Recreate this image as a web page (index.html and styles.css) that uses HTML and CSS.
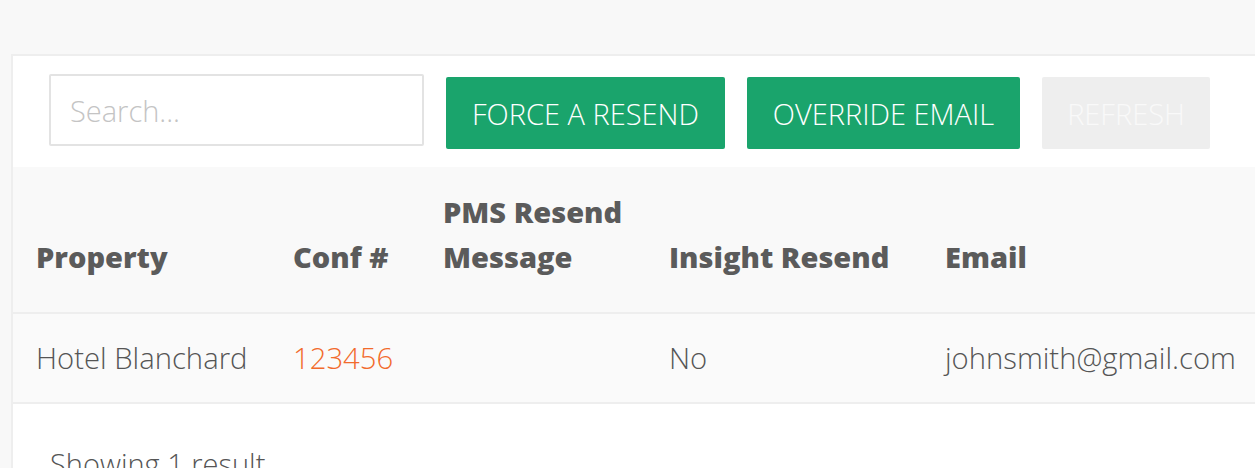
FILE: index.html
```html
<!DOCTYPE html>
<html>
<head>
<meta charset="utf-8">
<link rel="stylesheet" href="styles.css">
</head>
<body>
<div class="page">
  <div class="card">
    <div class="toolbar">
      <input class="search" type="text" placeholder="Search...">
      <button class="btn btn-green btn-resend">FORCE A RESEND</button>
      <button class="btn btn-green btn-override">OVERRIDE EMAIL</button>
      <button class="btn btn-disabled btn-refresh">REFRESH</button>
    </div>
    <table class="grid">
      <thead>
        <tr>
          <th class="c-prop">Property</th>
          <th class="c-conf">Conf #</th>
          <th class="c-pms">PMS Resend Message</th>
          <th class="c-ins">Insight Resend</th>
          <th class="c-email">Email</th>
        </tr>
      </thead>
      <tbody>
        <tr>
          <td>Hotel Blanchard</td>
          <td class="conf">123456</td>
          <td></td>
          <td>No</td>
          <td>johnsmith@gmail.com</td>
        </tr>
      </tbody>
    </table>
    <div class="footer">Showing 1 result</div>
  </div>
</div>
</body>
</html>
```
FILE: styles.css
```css
html, body {
  margin: 0;
  padding: 0;
}
body {
  background: #f8f8f8;
  font-family: "Open Sans", "Liberation Sans", sans-serif;
  font-weight: 300;
  color: #555;
  overflow: hidden;
}
.page {
  padding-top: 54px;
  padding-left: 11px;
}
.card {
  width: 1300px;
  background: #fff;
  border: 2px solid #eeeeee;
  border-right: none;
}
.toolbar {
  display: flex;
  align-items: flex-start;
  gap: 22px;
  padding: 18px 36px;
  height: 75px;
}
.search {
  box-sizing: border-box;
  width: 375px;
  height: 72px;
  border: 2px solid #e3e3e3;
  border-radius: 2px;
  padding: 0 19px;
  font-family: "Open Sans", sans-serif;
  font-weight: 300;
  font-size: 29px;
  color: #555;
  outline: none;
}
.search::placeholder {
  color: #c4c4c4;
}
.btn {
  box-sizing: border-box;
  margin-top: 3px;
  height: 72px;
  border: none;
  border-radius: 2px;
  font-family: "Open Sans", sans-serif;
  font-weight: 300;
  font-size: 29px;
  padding: 0;
  text-align: center;
}
.btn-green {
  background: #1aa46c;
  color: #fff;
}
.btn-disabled {
  background: #eeeeee;
  color: #f9f9f9;
}
.btn-resend { width: 279px; }
.btn-override { width: 273px; }
.btn-refresh { width: 168px; }
.grid {
  border-collapse: collapse;
  table-layout: fixed;
  width: 1290px;
}
.grid th, .grid td {
  box-sizing: border-box;
  padding: 0 10px 0 23px;
  text-align: left;
  vertical-align: middle;
}
.grid thead tr {
  background: #f9f9f9;
  height: 146px;
  border-bottom: 2px solid #eeeeee;
}
.grid th {
  font-weight: 800;
  font-size: 29px;
  line-height: 45px;
  color: #5b5b5b;
  vertical-align: bottom;
  padding-bottom: 33px;
}
.grid tbody tr {
  background: #fafafa;
  height: 90px;
  border-bottom: 2px solid #eeeeee;
}
.grid td {
  font-size: 29.25px;
  color: #555;
  white-space: nowrap;
}
.c-prop { width: 257px; }
.c-conf { width: 150px; }
.c-pms { width: 226px; }
.c-ins { width: 276px; }
.c-email { width: auto; }
.grid td.conf {
  color: #f26a2c;
}
.footer {
  padding: 40px 37px;
  font-size: 29px;
  color: #555;
}
```
